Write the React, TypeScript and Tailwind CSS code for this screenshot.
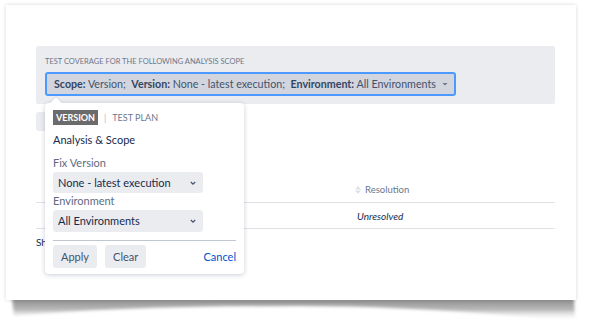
import React from 'react';

const font = { fontFamily: 'Lato, "Noto Sans", sans-serif' };

const Chevron = () => (
  <svg width="8" height="8" viewBox="0 0 8 8" className="text-[#42526e]">
    <path d="M1.8 3 L4 5.2 L6.2 3" fill="none" stroke="currentColor" strokeWidth="1.2" />
  </svg>
);

const Select = ({ value, h }: { value: string; h: string }) => (
  <div className={`flex ${h} w-[150px] items-center justify-between rounded-[3px] bg-[#ebecf0] pl-[5px] pr-[6px] text-[11px] text-[#172b4d]`}>
    <span>{value}</span>
    <Chevron />
  </div>
);

const ScopePopup = () => (
  <div className="absolute left-[45px] top-[103px] w-[199px] rounded-[4px] bg-white px-[8px] pt-[7px] pb-[6px] leading-[14px] shadow-[0_1px_5px_rgba(9,30,66,0.22)]">
    <div className="absolute -top-[4px] left-[7px] h-[8px] w-[8px] rotate-45 bg-white shadow-[-1px_-1px_1px_rgba(9,30,66,0.06)]" />
    <div className="relative flex h-[15px] items-center gap-[6px] text-[9px] uppercase">
      <span className="flex h-[15px] items-center bg-[#6b6b6b] px-[3px] font-bold text-white">Version</span>
      <span className="text-[#b3b9c4]">|</span>
      <span className="text-[#6b778c]">Test Plan</span>
    </div>
    <div className="mt-[8px] text-[11px] text-[#172b4d]">Analysis &amp; Scope</div>
    <div className="mt-[9px] text-[11px] text-[#5e6c84]">Fix Version</div>
    <div className="mt-[2px]"><Select value="None - latest execution" h="h-[21px]" /></div>
    <div className="mt-[1px] text-[11px] text-[#5e6c84]">Environment</div>
    <div className="mt-[2px]"><Select value="All Environments" h="h-[22px]" /></div>
    <div className="mt-[8px] border-t border-[#c1c7d0]" />
    <div className="mt-[4px] flex items-center gap-[8px]">
      <button className="h-[23px] rounded-[3px] bg-[#ebecf0] px-[8px] text-[11px] text-[#42526e]">Apply</button>
      <button className="h-[23px] rounded-[3px] bg-[#ebecf0] px-[8px] text-[11px] text-[#42526e]">Clear</button>
      <span className="ml-auto text-[11px] text-[#0052cc]">Cancel</span>
    </div>
  </div>
);

export default function App() {
  return (
    <div className="relative h-[330px] w-[589px] overflow-hidden bg-white" style={font}>
      {/* curled page shadow */}
      <svg className="absolute left-0 top-0" width="589" height="330" viewBox="0 0 589 330">
        <defs>
          <linearGradient id="curl" x1="0" y1="0" x2="0" y2="1">
            <stop offset="0" stopColor="#8a8a8a" />
            <stop offset="0.5" stopColor="#b8b8b8" />
            <stop offset="1" stopColor="#ffffff" stopOpacity="0" />
          </linearGradient>
          <filter id="soft" x="-5%" y="-50%" width="110%" height="200%">
            <feGaussianBlur stdDeviation="1.6" />
          </filter>
        </defs>
        <path d="M12 298 L574 298 L575 321 Q420 306 300 306 Q120 306 14 316 Z" fill="url(#curl)" filter="url(#soft)" />
      </svg>

      <div className="relative ml-[6px] mt-[5px] h-[295px] w-[570px] bg-white pl-[30px] pt-[41px] shadow-[0_0_4px_rgba(0,0,0,0.16)]">
        <div className="h-[58px] w-[519px] rounded-[2px] bg-[#ebecf0] pl-[9px] pt-[10px]">
          <div className="text-[7.5px] leading-[12px] uppercase text-[#6b778c]">
            Test coverage for the following analysis scope
          </div>
          <div className="mt-[4px] flex h-[24px] w-[411px] items-center gap-[5px] whitespace-nowrap rounded-[3px] border-2 border-[#4c9aff] bg-[#d2d5dd] pl-[7px] text-[10.7px] text-[#42526e]">
            <span>
              <b className="font-bold text-[#344563]">Scope:</b> Version;&nbsp;{' '}
              <b className="font-bold text-[#344563]">Version:</b> None - latest execution;&nbsp;{' '}
              <b className="font-bold text-[#344563]">Environment:</b> All Environments
            </span>
            <svg width="8" height="8" viewBox="0 0 8 8"><path d="M1.5 3 L4 5.5 L6.5 3 Z" fill="#6b778c" /></svg>
          </div>
        </div>

        <div className="mt-[8px] h-[19px] w-[60px] rounded-[3px] bg-[#ebecf0]" />

        <div className="mt-[47px] w-[519px] leading-[14px]">
          <div className="flex h-[25px] items-center border-b border-[#dfe1e6] pl-[318px] text-[9.5px] text-[#6b778c]">
            <svg width="8" height="10" viewBox="0 0 8 10" className="mr-[3px]">
              <path d="M4 1 L7 4.5 H1 Z M4 9 L7 5.5 H1 Z" fill="#dfe1e6" />
            </svg>
            Resolution
          </div>
          <div className="flex h-[26px] items-center border-b border-[#dfe1e6] pl-[321px] text-[10px] italic text-[#172b4d]">
            Unresolved
          </div>
          <div className="mt-[6px] text-[10px] text-[#172b4d]">Showing 1 of 1</div>
        </div>

        <div className="absolute inset-0">
          <div className="relative -ml-[6px] -mt-[5px]">
            <ScopePopup />
          </div>
        </div>
      </div>
    </div>
  );
}
